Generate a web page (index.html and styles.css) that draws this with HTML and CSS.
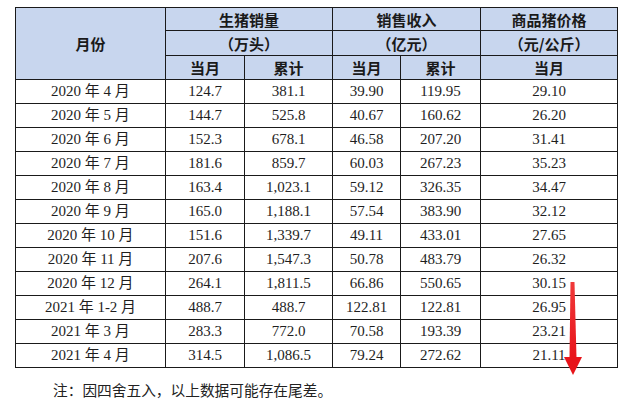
FILE: index.html
```html
<!DOCTYPE html>
<html lang="zh-CN">
<head>
<meta charset="utf-8">
<link rel="stylesheet" href="styles.css">
</head>
<body>
<div class="page">
  <table class="data">
    <colgroup>
      <col class="c1"><col class="c2"><col class="c3"><col class="c4"><col class="c5"><col class="c6">
    </colgroup>
    <thead>
      <tr class="h1">
        <th rowspan="3">月份</th>
        <th colspan="2">生猪销量</th>
        <th colspan="2">销售收入</th>
        <th>商品猪价格</th>
      </tr>
      <tr class="h2">
        <th colspan="2">（万头）</th>
        <th colspan="2">（亿元）</th>
        <th>（元/公斤）</th>
      </tr>
      <tr class="h3">
        <th>当月</th><th>累计</th><th>当月</th><th>累计</th><th>当月</th>
      </tr>
    </thead>
    <tbody>
      <tr><td>2020 年 4 月</td><td>124.7</td><td>381.1</td><td>39.90</td><td>119.95</td><td>29.10</td></tr>
      <tr><td>2020 年 5 月</td><td>144.7</td><td>525.8</td><td>40.67</td><td>160.62</td><td>26.20</td></tr>
      <tr><td>2020 年 6 月</td><td>152.3</td><td>678.1</td><td>46.58</td><td>207.20</td><td>31.41</td></tr>
      <tr><td>2020 年 7 月</td><td>181.6</td><td>859.7</td><td>60.03</td><td>267.23</td><td>35.23</td></tr>
      <tr><td>2020 年 8 月</td><td>163.4</td><td>1,023.1</td><td>59.12</td><td>326.35</td><td>34.47</td></tr>
      <tr><td>2020 年 9 月</td><td>165.0</td><td>1,188.1</td><td>57.54</td><td>383.90</td><td>32.12</td></tr>
      <tr><td>2020 年 10 月</td><td>151.6</td><td>1,339.7</td><td>49.11</td><td>433.01</td><td>27.65</td></tr>
      <tr><td>2020 年 11 月</td><td>207.6</td><td>1,547.3</td><td>50.78</td><td>483.79</td><td>26.32</td></tr>
      <tr><td>2020 年 12 月</td><td>264.1</td><td>1,811.5</td><td>66.86</td><td>550.65</td><td>30.15</td></tr>
      <tr><td>2021 年 1-2 月</td><td>488.7</td><td>488.7</td><td>122.81</td><td>122.81</td><td>26.95</td></tr>
      <tr><td>2021 年 3 月</td><td>283.3</td><td>772.0</td><td>70.58</td><td>193.39</td><td>23.21</td></tr>
      <tr><td>2021 年 4 月</td><td>314.5</td><td>1,086.5</td><td>79.24</td><td>272.62</td><td>21.11</td></tr>
    </tbody>
  </table>
  <p class="note">注：因四舍五入，以上数据可能存在尾差。</p>
  <svg class="arrow" width="30" height="100" viewBox="0 0 30 100" aria-hidden="true">
    <defs>
      <linearGradient id="ag" x1="0" y1="0" x2="0" y2="1">
        <stop offset="0" stop-color="#f03a3a"/>
        <stop offset="1" stop-color="#e8141a"/>
      </linearGradient>
    </defs>
    <polygon points="10.5,0 14.5,0 16.5,76 9.5,76" fill="url(#ag)"/>
    <polygon points="4,75 22,75 13,93" fill="#e8141a"/>
  </svg>
</div>
</body>
</html>
```

FILE: styles.css
```css
html, body {
  margin: 0;
  padding: 0;
  background: #ffffff;
}
.page {
  position: relative;
  width: 640px;
  height: 409px;
  padding: 7px 0 0 15px;
  box-sizing: border-box;
}
.data {
  border-collapse: collapse;
  table-layout: fixed;
  width: 602px;
  color: #1e1e1e;
  font-family: "Liberation Serif", "Noto Sans CJK SC", serif;
  font-size: 15px;
}
.c1 { width: 150px; }
.c2 { width: 79px; }
.c3 { width: 88px; }
.c4 { width: 68px; }
.c5 { width: 80px; }
.c6 { width: 137px; }
.data th, .data td {
  border: 1px solid #1a1a1a;
  padding: 0;
  text-align: center;
  vertical-align: middle;
  line-height: 1;
}
.data th {
  background: #c8d6ee;
  font-family: "Noto Sans CJK SC", sans-serif;
  font-weight: 700;
  font-size: 15px;
  color: #1a1a1a;
}
.h1 { height: 23px; }
.h2 { height: 25px; }
.h3 { height: 24px; }
.data tbody tr { height: 24px; }
.note {
  margin: 14px 0 0 38px;
  font-family: "Liberation Serif", "Noto Sans CJK SC", serif;
  font-size: 14.7px;
  color: #222;
  line-height: 18px;
}
.arrow {
  position: absolute;
  left: 560px;
  top: 282px;
}
```
